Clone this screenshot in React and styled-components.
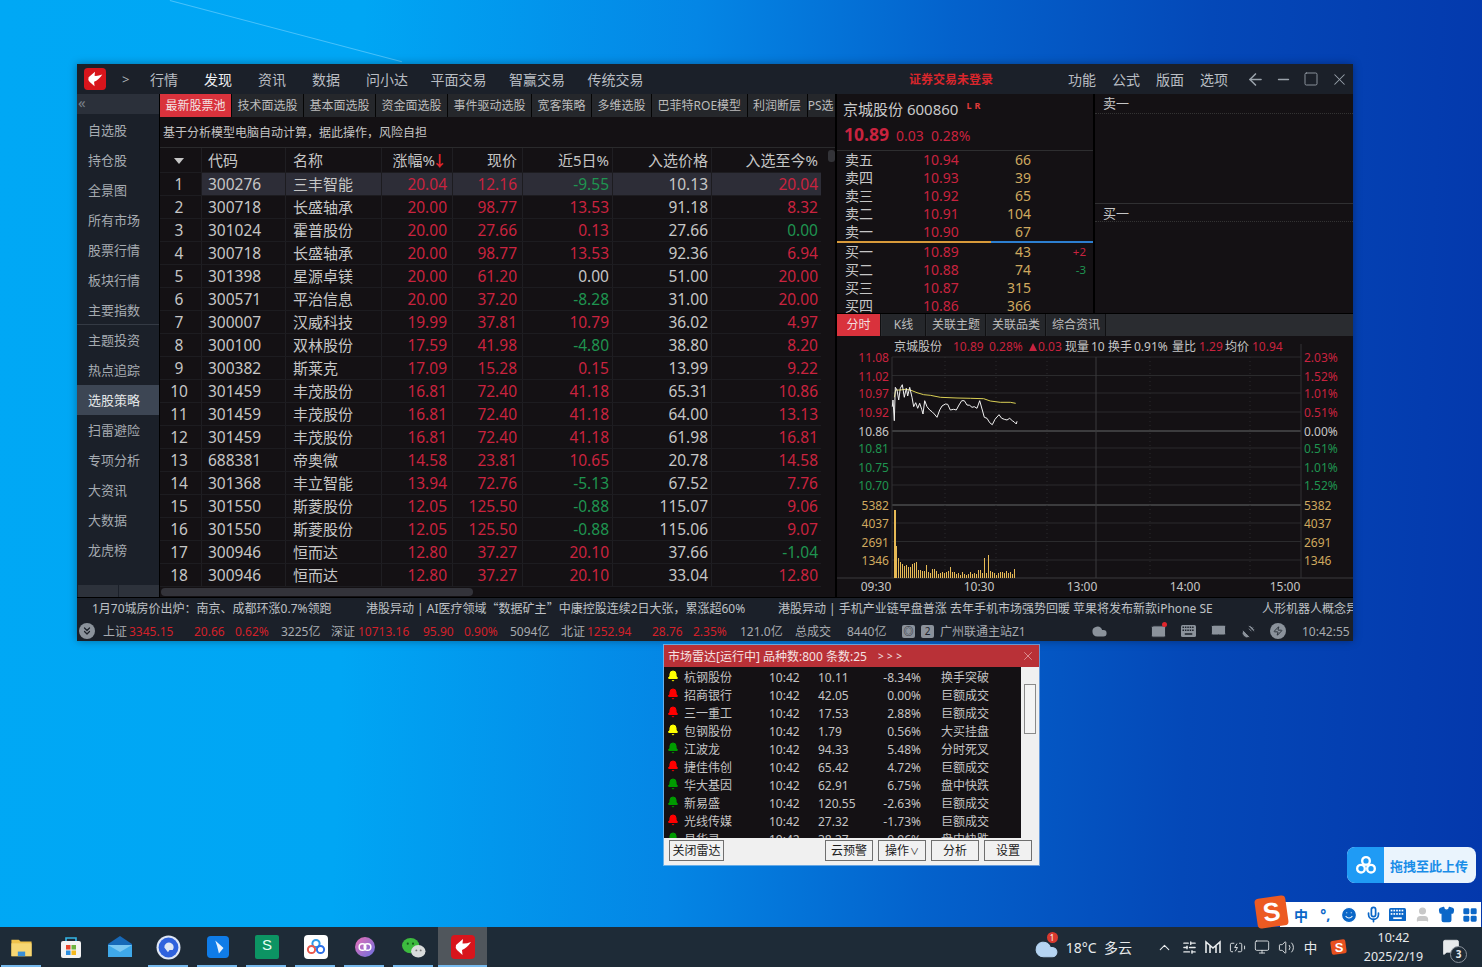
import React from 'react';
import styled, { createGlobalStyle } from 'styled-components';
import {
  ArrowLeft, Minus, Square, X, Cloud, Mail, Monitor, SatelliteDish, Zap,
  ChevronUp, ChevronsDown, SlidersHorizontal, Volume2, BatteryCharging, MessageSquare,
  Smile, Mic, Shirt, LayoutGrid, User, Bell,
} from 'lucide-react';

const RED = '#c9233f';
const GREEN = '#1f9450';
const WHITE = '#c6c6c6';
const GOLD = '#cfa95f';
const BAR = '#1b2029';
const FONT = '"Noto Sans", "Noto Sans CJK SC", sans-serif';

const GlobalStyle = createGlobalStyle`
  html, body { margin: 0; padding: 0; height: 100%; overflow: hidden; }
  * { box-sizing: border-box; }
  body { font-family: ${FONT}; }
`;

const navItems = ['行情', '发现', '资讯', '数据', '问小达', '平面交易', '智赢交易', '传统交易'];
const sideItems = ['自选股', '持仓股', '全景图', '所有市场', '股票行情', '板块行情', '主要指数', '主题投资', '热点追踪', '选股策略', '扫雷避险', '专项分析', '大资讯', '大数据', '龙虎榜'];
const tabs = ['最新股票池', '技术面选股', '基本面选股', '资金面选股', '事件驱动选股', '宽客策略', '多维选股', '巴菲特ROE模型', '利润断层'];

const stocks = [
  ['300276', '三丰智能', '20.04', '12.16', '-9.55', '10.13', '20.04'],
  ['300718', '长盛轴承', '20.00', '98.77', '13.53', '91.18', '8.32'],
  ['301024', '霍普股份', '20.00', '27.66', '0.13', '27.66', '0.00'],
  ['300718', '长盛轴承', '20.00', '98.77', '13.53', '92.36', '6.94'],
  ['301398', '星源卓镁', '20.00', '61.20', '0.00', '51.00', '20.00'],
  ['300571', '平治信息', '20.00', '37.20', '-8.28', '31.00', '20.00'],
  ['300007', '汉威科技', '19.99', '37.81', '10.79', '36.02', '4.97'],
  ['300100', '双林股份', '17.59', '41.98', '-4.80', '38.80', '8.20'],
  ['300382', '斯莱克', '17.09', '15.28', '0.15', '13.99', '9.22'],
  ['301459', '丰茂股份', '16.81', '72.40', '41.18', '65.31', '10.86'],
  ['301459', '丰茂股份', '16.81', '72.40', '41.18', '64.00', '13.13'],
  ['301459', '丰茂股份', '16.81', '72.40', '41.18', '61.98', '16.81'],
  ['688381', '帝奥微', '14.58', '23.81', '10.65', '20.78', '14.58'],
  ['301368', '丰立智能', '13.94', '72.76', '-5.13', '67.52', '7.76'],
  ['301550', '斯菱股份', '12.05', '125.50', '-0.88', '115.07', '9.06'],
  ['301550', '斯菱股份', '12.05', '125.50', '-0.88', '115.06', '9.07'],
  ['300946', '恒而达', '12.80', '37.27', '20.10', '37.66', '-1.04'],
  ['300946', '恒而达', '12.80', '37.27', '20.10', '33.04', '12.80'],
];

const sells = [['卖五', '10.94', '66'], ['卖四', '10.93', '39'], ['卖三', '10.92', '65'], ['卖二', '10.91', '104'], ['卖一', '10.90', '67']];
const buys = [['买一', '10.89', '43', '+2'], ['买二', '10.88', '74', '-3'], ['买三', '10.87', '315'], ['买四', '10.86', '366']];

const radarRows = [
  ['#ffff00', '杭钢股份', '10.11', '-8.34%', '换手突破'],
  ['#ff0000', '招商银行', '42.05', '0.00%', '巨额成交'],
  ['#ff0000', '三一重工', '17.53', '2.88%', '巨额成交'],
  ['#ffff00', '包钢股份', '1.79', '0.56%', '大买挂盘'],
  ['#009a00', '江波龙', '94.33', '5.48%', '分时死叉'],
  ['#ff0000', '捷佳伟创', '65.42', '4.72%', '巨额成交'],
  ['#009a00', '华大基因', '62.91', '6.75%', '盘中快跌'],
  ['#009a00', '新易盛', '120.55', '-2.63%', '巨额成交'],
  ['#ff0000', '光线传媒', '27.32', '-1.73%', '巨额成交'],
  ['#009a00', '易华录', '38.37', '-0.96%', '盘中快跌'],
];

const signColor = (v) => {
  const n = parseFloat(v);
  if (n < 0) return GREEN;
  return n > 0 ? RED : WHITE;
};

const Desktop = styled.div`
  position: relative;
  width: 100vw;
  height: 100vh;
  display: flex;
  flex-direction: column;
  justify-content: flex-end;
  overflow: hidden;
  background: linear-gradient(92deg, #00a8f5 0%, #00a6f4 24%, #0486e5 46%, #0462cc 63%, #0448b8 80%, #0438ac 100%);
  &::before {
    content: '';
    position: absolute;
    left: 170px;
    top: 0;
    width: 240px;
    height: 1px;
    background: rgba(130, 215, 255, 0.55);
    transform: rotate(14.8deg);
    transform-origin: left top;
  }
`;

const Win = styled.div`
  position: absolute;
  left: 77px;
  top: 64px;
  width: 1276px;
  height: 577px;
  display: flex;
  flex-direction: column;
  background: #000;
  box-shadow: 0 0 8px rgba(0, 0, 0, 0.35);
`;

const TitleBar = styled.div`
  height: 30px;
  display: flex;
  align-items: center;
  background: ${BAR};
  padding-left: 7px;
  color: #b9bdc3;
  font-size: 14px;
`;

const Caret = styled.span`
  width: 44px;
  padding-left: 16px;
  font-size: 13px;
  color: #b0b4ba;
`;

const NavItem = styled.span`
  min-width: 54px;
  padding-right: 22.5px;
  white-space: nowrap;
  color: ${(p) => (p.$active ? '#eceff2' : '#b9bdc3')};
`;

const LoginWarn = styled.span`
  margin-left: auto;
  font-size: 12px;
  font-weight: 700;
  color: #d8262c;
  width: 159px;
`;

const MenuItem = styled.span`
  width: 44px;
  white-space: nowrap;
`;

const WinBtns = styled.div`
  display: flex;
  align-items: center;
  width: 112px;
  margin-left: -3px;
  color: #9aa2ab;
  span {
    width: 28px;
    display: flex;
    justify-content: center;
  }
`;

const Body = styled.div`
  flex: 1;
  display: flex;
  min-height: 0;
`;

const Sidebar = styled.div`
  width: 82px;
  margin-right: 1px;
  background: ${BAR};
  display: flex;
  flex-direction: column;
`;

const Collapse = styled.div`
  height: 20px;
  margin-bottom: 1px;
  line-height: 16px;
  padding-left: 1px;
  font-size: 15px;
  color: #78808a;
  background: #2b303a;
`;

const SideItem = styled.div`
  height: 30px;
  line-height: 30px;
  padding-left: 11px;
  font-size: 13px;
  color: ${(p) => (p.$active ? '#e4e6e8' : '#a6abb1')};
  background: ${(p) => (p.$active ? '#3d4654' : 'transparent')};
  border-bottom: ${(p) => (p.$line ? '1px solid #343a44' : 'none')};
`;

const SideFoot = styled.div`
  margin-top: auto;
  height: 12px;
  display: flex;
  gap: 1px;
  padding-left: 1px;
  span {
    flex: 1;
    background: #2d323b;
  }
`;

const Main = styled.div`
  width: 675px;
  margin-right: 2px;
  display: flex;
  flex-direction: column;
  background: #141114;
  overflow: hidden;
`;

const TabStrip = styled.div`
  height: 23px;
  display: flex;
  gap: 1px;
  background: #050505;
  overflow: hidden;
  flex: none;
`;

const Tab = styled.div`
  padding: 0 5.5px;
  line-height: 23px;
  font-size: 12px;
  white-space: nowrap;
  color: ${(p) => (p.$active ? '#f2e3e3' : '#bcbcbc')};
  background: ${(p) => (p.$active ? '#d9323c' : '#25272b')};
  width: ${(p) => (p.$active ? '71px' : 'auto')};
  text-align: center;
`;

const TabCut = styled(Tab)`
  flex: 1;
  padding: 0;
  text-align: left;
  overflow: hidden;
`;

const Note = styled.div`
  height: 31px;
  line-height: 31px;
  padding-left: 3px;
  font-size: 12px;
  color: #c4c4c4;
  border-bottom: 1px solid #2a2a2c;
  flex: none;
`;

const TableWrap = styled.div`
  flex: 1;
  display: flex;
  min-height: 0;
`;

const Table = styled.div`
  width: 661px;
`;

const Row = styled.div`
  display: grid;
  grid-template-columns: 41px 84px 96px 71px 70px 90px 99px 110px;
  height: ${(p) => (p.$head ? '25px' : '23px')};
  line-height: ${(p) => (p.$head ? '24px' : '22px')};
  border-bottom: 1px solid #1d1c20;
  & > :nth-child(3) { padding-left: 7px; }
  & > :nth-child(4), & > :nth-child(5) { padding-right: 5px; }
`;

const Cell = styled.div`
  padding: 0 ${(p) => (p.$align === 'right' ? '3px' : '6px')} 0 ${(p) => (p.$align === 'right' ? '2px' : '6px')};
  text-align: ${(p) => p.$align || 'left'};
  font-size: ${(p) => (p.$cjk ? '15px' : '15.5px')};
  color: ${(p) => p.$color || WHITE};
  background: ${(p) => (p.$sel ? '#2d2d37' : 'transparent')};
  border-left: 1px solid ${(p) => (p.$sel ? '#1d1c20' : '#1f1e22')};
  white-space: nowrap;
  overflow: hidden;
`;

const Idx = styled(Cell)`
  text-align: center;
  padding: 0 3px 0 0;
  border-left: none;
`;

const SortMark = styled.i`
  display: inline-block;
  width: 0;
  height: 0;
  margin-bottom: 2px;
  border-left: 5px solid transparent;
  border-right: 5px solid transparent;
  border-top: 6px solid #c6c6c6;
`;

const DownArrow = styled.b`
  color: #e0272f;
  font-weight: 700;
  margin-left: -3px;
`;

const VTrack = styled.div`
  flex: 1;
  padding: 2px 0 0 7px;
  span {
    display: block;
    height: 12px;
    border-radius: 3px;
    background: #333338;
  }
`;

const HScroll = styled.div`
  height: 10px;
  flex: none;
  padding: 1px 0 0 1px;
  background: #141114;
  span {
    display: block;
    width: 312px;
    height: 8px;
    border-radius: 4px;
    background: #33333a;
  }
`;

const Right = styled.div`
  flex: 1;
  display: flex;
  flex-direction: column;
  min-width: 0;
`;

const TopRight = styled.div`
  height: 219px;
  display: flex;
  gap: 2px;
  overflow: hidden;
  flex: none;
`;

const Quote = styled.div`
  width: 256px;
  background: #141114;
  overflow: hidden;
`;

const QuoteHead = styled.div`
  height: 57px;
  padding: 5px 0 0 6px;
  border-bottom: 1px solid #2e2e30;
  color: #c9c9c9;
`;

const QuoteName = styled.div`
  font-size: 15px;
  line-height: 20px;
  white-space: nowrap;
  sup {
    font-size: 9px;
    font-weight: 700;
    line-height: 0;
    color: #e03a3a;
    margin-left: 8px;
    letter-spacing: 3px;
  }
`;

const QuoteLast = styled.div`
  display: flex;
  align-items: baseline;
  margin-top: 4px;
  color: ${RED};
  font-size: 14px;
  line-height: 22px;
  b {
    font-size: 17.5px;
    width: 53px;
    padding-left: 1px;
  }
  span {
    width: 35px;
  }
`;

const BookRow = styled.div`
  display: grid;
  grid-template-columns: 78px 61px 47px 55px;
  height: 18px;
  line-height: 18px;
  padding-left: 8px;
  font-size: 14px;
  color: ${WHITE};
`;

const BookPrice = styled.span`
  color: ${RED};
`;

const BookVol = styled.span`
  color: ${GOLD};
  text-align: right;
`;

const BookDelta = styled.span`
  color: ${(p) => p.$color};
  text-align: right;
  font-size: 11.5px;
`;

const BookLine = styled.div`
  height: 2px;
  background: linear-gradient(90deg, #d89a3a 0 60%, #2d7fd0 60%);
`;

const Trades = styled.div`
  flex: 1;
  background: #141114;
  display: flex;
  flex-direction: column;
`;

const TradeHead = styled.div`
  height: ${(p) => (p.$first ? '20px' : '19px')};
  line-height: 18px;
  padding-left: 8px;
  font-size: 13px;
  color: ${WHITE};
  border-top: ${(p) => (p.$first ? 'none' : '1px solid #303032')};
  border-bottom: 1px dotted #333;
`;

const TradeGap = styled.div`
  height: 89px;
`;

const ChartTabs = styled.div`
  height: 22px;
  margin-top: 1px;
  display: flex;
  gap: 1px;
  background: #2a2c30;
  flex: none;
`;

const ChartTab = styled.div`
  width: ${(p) => p.$w}px;
  text-align: center;
  line-height: 21px;
  font-size: 12px;
  color: ${(p) => (p.$active ? '#f3dede' : '#bcbcbc')};
  background: ${(p) => (p.$active ? '#d9323c' : '#25272b')};
  border-right: 1px solid #101012;
`;

const ChartBox = styled.div`
  flex: 1;
  background: #141114;
  svg {
    display: block;
    font-family: ${FONT};
    font-size: 12px;
  }
`;

const Ticker = styled.div`
  height: 24px;
  display: flex;
  align-items: center;
  padding: 0 0 3px 15px;
  border-top: 1px solid #000;
  background: ${BAR};
  font-size: 12px;
  color: #bfc2c6;
  overflow: hidden;
  white-space: nowrap;
  flex: none;
`;

const TickerItem = styled.span`
  flex: none;
  width: ${(p) => p.$w}px;
`;

const WideQuote = styled.span`
  font-family: "Noto Sans CJK SC", sans-serif;
`;

const StatusBar = styled.div`
  height: 20px;
  display: flex;
  align-items: center;
  padding-left: 2px;
  background: ${BAR};
  font-size: 12px;
  color: #a7abb0;
  white-space: nowrap;
  overflow: hidden;
  flex: none;
`;

const Stat = styled.span`
  flex: none;
  width: ${(p) => p.$w}px;
  color: ${(p) => (p.$up ? '#d3202a' : '#a7abb0')};
`;

const RoundIcon = styled.span`
  flex: none;
  width: 16px;
  height: 16px;
  margin-right: ${(p) => (p.$flush ? 0 : 8)}px;
  border-radius: 50%;
  background: #8b929b;
  color: ${BAR};
  display: flex;
  align-items: center;
  justify-content: center;
`;

const BoxTag = styled.span`
  flex: none;
  width: 13px;
  height: 13px;
  line-height: 13px;
  margin-right: 6px;
  text-align: center;
  border-radius: 2px;
  font-size: 10px;
  color: ${BAR};
  background: #8b929b;
`;

const StatusIcons = styled.div`
  margin-left: auto;
  display: flex;
  align-items: center;
  color: ${BAR};
  svg {
    flex: none;
    fill: #8b929b;
  }
`;

const StatusSlot = styled.span`
  position: relative;
  width: ${(p) => p.$w}px;
  display: flex;
  justify-content: center;
`;

const RedDot = styled.i`
  position: absolute;
  right: 6px;
  top: -1px;
  width: 5px;
  height: 5px;
  border-radius: 50%;
  background: #e0262c;
`;

const Clock = styled.span`
  width: 51px;
  color: #a7abb0;
`;

const Radar = styled.div`
  position: absolute;
  left: 664px;
  top: 645px;
  width: 375px;
  height: 220px;
  display: flex;
  flex-direction: column;
  background: #f0f0f0;
  box-shadow: 0 0 0 1px rgba(200, 220, 240, 0.5);
`;

const RadarHead = styled.div`
  height: 22px;
  display: flex;
  align-items: center;
  padding: 0 4px;
  background: #b93137;
  color: #f4e2e2;
  font-size: 12px;
  white-space: nowrap;
  small {
    font-size: 10px;
    margin-left: 11px;
    letter-spacing: 3.5px;
  }
  svg {
    margin-left: auto;
    color: #e9b3b3;
  }
`;

const RadarBody = styled.div`
  height: 171px;
  display: flex;
  flex: none;
`;

const RadarList = styled.div`
  width: 357px;
  background: #141114;
  overflow: hidden;
  padding-top: 2px;
`;

const RadarRow = styled.div`
  display: grid;
  grid-template-columns: 20px 85px 49px 63px 40px 1fr;
  height: 18px;
  line-height: 18px;
  font-size: 12px;
  color: #c4c4c4;
  white-space: nowrap;
  span:nth-child(5) { text-align: right; }
  span:nth-child(6) { padding-left: 20px; }
  span:nth-child(1) { padding-left: 3px; }
`;

const RadarScroll = styled.div`
  flex: 1;
  padding: 17px 3px 0;
  background: #f0f0f0;
  span {
    display: block;
    height: 50px;
    background: #f4f4f4;
    border: 1px solid #8a8a8a;
  }
`;

const RadarFoot = styled.div`
  flex: 1;
  display: flex;
  align-items: flex-start;
  padding: 2px 6px 0 5px;
  gap: 5px;
`;

const RadarBtn = styled.div`
  width: ${(p) => p.$w || 48}px;
  height: 21px;
  line-height: 19px;
  text-align: center;
  font-size: 12px;
  color: #1c1c1c;
  background: #f1f1f1;
  border: 1px solid #6f6f6f;
  margin-left: ${(p) => p.$gap || 0}px;
  white-space: nowrap;
  small {
    font-size: 9px;
    margin-left: 1px;
  }
`;

const Pill = styled.div`
  position: absolute;
  left: 1347px;
  top: 847px;
  width: 129px;
  height: 36px;
  display: flex;
  align-items: center;
  border-radius: 8px;
  overflow: hidden;
  background: #eaf4fd;
  color: #1a8de8;
  font-size: 13px;
  font-weight: 700;
`;

const PillIcon = styled.div`
  width: 37px;
  height: 100%;
  margin-right: 6px;
  display: flex;
  align-items: center;
  justify-content: center;
  background: #1f9bf5;
`;

const Ime = styled.div`
  position: absolute;
  left: 1280px;
  top: 902px;
  width: 201px;
  height: 25px;
  display: flex;
  align-items: center;
  padding-left: 9px;
  background: #fff;
  color: #0b67c8;
  font-weight: 700;
  font-size: 14px;
`;

const ImeSlot = styled.span`
  width: 24.2px;
  flex: none;
  display: flex;
  justify-content: center;
`;

const ImeLogo = styled.div`
  position: absolute;
  left: 1256px;
  top: 897px;
  width: 31px;
  height: 30px;
  transform: rotate(-8deg);
  border-radius: 4px;
  background: #ec5a22;
  color: #fff;
  font: 700 26px/30px "Liberation Sans", sans-serif;
  text-align: center;
`;

const Taskbar = styled.div`
  height: 40px;
  display: flex;
  align-items: stretch;
  background: #1e2b37;
  color: #e7eaec;
  flex: none;
`;

const Apps = styled.div`
  display: flex;
  margin-left: -3px;
`;

const AppSlot = styled.div`
  width: 49px;
  display: flex;
  align-items: center;
  justify-content: center;
  position: relative;
  background: ${(p) => (p.$active ? '#50565c' : 'transparent')};
  &::after {
    content: '';
    position: absolute;
    left: ${(p) => (p.$active ? '0' : '4px')};
    right: ${(p) => (p.$active ? '0' : '5px')};
    bottom: 0;
    height: 2px;
    background: ${(p) => (p.$open ? '#76b9ed' : 'transparent')};
  }
`;

const Tray = styled.div`
  margin-left: auto;
  display: flex;
  align-items: center;
  color: #e7eaec;
`;

const Weather = styled.div`
  position: relative;
  width: 32px;
  height: 30px;
  display: flex;
  align-items: flex-end;
  color: #b5d4f2;
  svg { fill: currentColor; }
  em {
    position: absolute;
    left: 13px;
    top: 0;
    width: 11px;
    height: 11px;
    border-radius: 50%;
    background: #d8392f;
    color: #fff;
    font: 8px/11px "Noto Sans", sans-serif;
    text-align: center;
  }
`;

const WeatherText = styled.span`
  width: 87px;
  font-size: 14px;
  word-spacing: 4px;
  white-space: nowrap;
`;

const TraySlot = styled.span`
  width: 24.3px;
  margin-left: ${(p) => p.$gap || 0}px;
  display: flex;
  justify-content: center;
  font-size: 13.5px;
`;

const DateBox = styled.div`
  width: 75px;
  margin-left: 5px;
  text-align: center;
  font-size: 12.5px;
  line-height: 19px;
  white-space: nowrap;
`;

const Notify = styled.div`
  position: relative;
  width: 39px;
  margin-right: 12px;
  display: flex;
  justify-content: center;
  align-items: center;
  height: 100%;
  svg { fill: #e7eaec; }
  em {
    position: absolute;
    left: 19px;
    top: 19px;
    width: 17px;
    height: 17px;
    border-radius: 50%;
    border: 1px solid #8b929b;
    background: #1e2b37;
    font: 700 10px/15px "Noto Sans", sans-serif;
    text-align: center;
  }
`;

const LogoMark = ({ size = 22 }) => (
  <svg width={size} height={size} viewBox="0 0 24 24">
    <rect width="24" height="24" rx="4" fill="#d8151c" />
    <path d="M5 10 L12 4 L11.5 8.5 Q15 9 20 7 Q16 13 11 15 L11.5 20 L6 15 Q4 13 5 10 Z" fill="#fff" />
  </svg>
);

// filled keyboard with light keys, used in the status bar and the IME bar
const KeyGrid = ({ size, body, keys }) => (
  <svg width={size} height={size * 0.8} viewBox="0 0 20 16" style={{ fill: body }}>
    <rect width="20" height="16" rx="2" fill={body} />
    {[3, 6.2, 9.4, 12.6, 15.8].map((x) => [3, 7].map((y) => (
      <rect key={`${x}-${y}`} x={x - 1} y={y - 1} width="2" height="2" fill={keys} />
    )))}
    <rect x="5" y="11" width="10" height="2" fill={keys} />
  </svg>
);

const AppIcon = ({ kind }) => {
  switch (kind) {
    case 'folder':
      return (
        <svg width="23" height="22" viewBox="0 0 24 24">
          <path d="M1 4 h8 l2 2 h12 v16 H1 Z" fill="#f0c24b" />
          <path d="M1 8 h22 v14 H1 Z" fill="#f7d774" />
          <rect x="8" y="17" width="8" height="5" fill="#3a8fd6" />
        </svg>
      );
    case 'store':
      return (
        <svg width="24" height="24" viewBox="0 0 24 24">
          <path d="M7 6 V3 h10 v3" fill="none" stroke="#35b6e6" strokeWidth="1.6" />
          <rect x="2" y="6" width="20" height="17" rx="2" fill="#f3f3f3" />
          <rect x="7" y="10" width="4.5" height="4.5" fill="#e8452c" />
          <rect x="12.5" y="10" width="4.5" height="4.5" fill="#6cb33f" />
          <rect x="7" y="15.5" width="4.5" height="4.5" fill="#2c8fe0" />
          <rect x="12.5" y="15.5" width="4.5" height="4.5" fill="#f5b91f" />
        </svg>
      );
    case 'mail':
      return (
        <svg width="24" height="24" viewBox="0 0 24 24">
          <path d="M0 9 L12 1 L24 9 V22 H0 Z" fill="#1769b8" />
          <path d="M0 10 h24 v12 H0 Z" fill="#3fa9ea" />
          <path d="M0 10 L12 17 L24 10" fill="#7cc8f3" />
        </svg>
      );
    case 'browser':
      return (
        <svg width="25" height="25" viewBox="0 0 24 24">
          <circle cx="12" cy="12" r="11.5" fill="#dfe7f5" />
          <circle cx="12" cy="12" r="9.5" fill="#2f62dd" />
          <path d="M8 12 a4.5 4.5 0 1 1 8 2.5 h-3 l-1.5 2 Z" fill="#dfe7f5" />
        </svg>
      );
    case 'blue':
      return (
        <svg width="22" height="22" viewBox="0 0 24 24">
          <rect width="24" height="24" rx="4" fill="#0f7ce8" />
          <path d="M9 5 L18 13 L13 19 L11 11 Z" fill="#e6f2ff" />
        </svg>
      );
    case 'sheet':
      return (
        <svg width="24" height="24" viewBox="0 0 24 24">
          <rect width="24" height="24" rx="2" fill="#0c9463" />
          <text x="12" y="15" textAnchor="middle" fontSize="15" fill="#e8fff5" fontFamily="Liberation Sans">S</text>
        </svg>
      );
    case 'baidu':
      return (
        <svg width="24" height="24" viewBox="0 0 24 24">
          <rect width="24" height="24" rx="4" fill="#fff" />
          <circle cx="12" cy="8.5" r="3.6" fill="none" stroke="#2c9be8" strokeWidth="2" />
          <circle cx="7.5" cy="14.5" r="3.6" fill="none" stroke="#e9584d" strokeWidth="2" />
          <circle cx="16.5" cy="14.5" r="3.6" fill="none" stroke="#2c6fe8" strokeWidth="2" />
        </svg>
      );
    case 'purple':
      return (
        <svg width="20" height="20" viewBox="0 0 24 24">
          <defs>
            <linearGradient id="pg" x1="0" y1="0" x2="1" y2="1">
              <stop offset="0" stopColor="#e86fb4" />
              <stop offset="1" stopColor="#6a6fe0" />
            </linearGradient>
          </defs>
          <circle cx="12" cy="12" r="12" fill="url(#pg)" />
          <circle cx="9" cy="12" r="4" fill="none" stroke="#fff" strokeWidth="1.8" />
          <circle cx="15" cy="12" r="4" fill="none" stroke="#fff" strokeWidth="1.8" />
        </svg>
      );
    case 'wechat':
      return (
        <svg width="25" height="23" viewBox="0 0 26 24">
          <ellipse cx="10" cy="10" rx="9" ry="8" fill="#3dbb3f" />
          <ellipse cx="18" cy="16" rx="7.5" ry="6.5" fill="#d9dcdc" />
          <circle cx="16" cy="15" r="1" fill="#777" />
          <circle cx="20.5" cy="15" r="1" fill="#777" />
          <circle cx="7" cy="8" r="1.1" fill="#14591a" />
          <circle cx="12.5" cy="8" r="1.1" fill="#14591a" />
        </svg>
      );
    default:
      return <LogoMark size={24} />;
  }
};

const apps = [
  ['folder', true], ['store', false], ['mail', false], ['browser', true], ['blue', true],
  ['sheet', true], ['baidu', true], ['purple', true], ['wechat', true], ['logo', true],
];

// chart points read off the reference at 3x, relative to (837, 310)
const whitePts = [[166,290],[168,270],[172,332],[175,232],[180,240],[185,270],[190,235],[196,224],[202,262],[208,235],[212,258],[218,232],[225,262],[230,290],[236,278],[242,295],[248,280],[254,298],[258,312],[263,272],[270,290],[278,300],[285,305],[292,312],[300,322],[308,300],[315,288],[325,282],[332,283],[340,300],[350,298],[358,300],[366,285],[374,272],[382,272],[390,285],[398,286],[405,292],[412,290],[420,295],[428,272],[436,300],[442,322],[450,325],[458,338],[466,344],[474,328],[486,314],[494,325],[502,328],[510,330],[518,325],[526,332],[532,336],[538,342],[540,334]];
const yellowPts = [[172,262],[176,240],[190,240],[205,238],[220,240],[240,248],[260,254],[280,256],[310,262],[360,264],[400,265],[440,266],[460,273],[490,277],[520,277],[536,280]];
const toPoints = (pts) => pts.map(([x, y]) => `${(x / 3).toFixed(1)},${(y / 3 - 26).toFixed(1)}`).join(' ');

const volumes = [68,32,20,16,14,12,13,11,11,14,15,16,8,8,7,7,13,6,5,9,9,7,4,5,6,5,6,7,11,6,6,4,5,3,6,4,3,4,6,4,5,4,8,8,5,20,5,23,7,6,5,3,5,6,6,5,7,5,6,4,9];

const leftAxis = [
  [21, '11.08', RED], [39.5, '11.02', RED], [57, '10.97', RED], [76, '10.92', RED], [95, '10.86', WHITE],
  [112, '10.81', GREEN], [131, '10.75', GREEN], [149, '10.70', GREEN],
  [169, '5382', GOLD], [187, '4037', GOLD], [205.5, '2691', GOLD], [224, '1346', GOLD],
];
const rightAxis = [
  [21, '2.03%', RED], [39.5, '1.52%', RED], [57, '1.01%', RED], [76, '0.51%', RED], [95, '0.00%', WHITE],
  [112, '0.51%', GREEN], [131, '1.01%', GREEN], [149, '1.52%', GREEN],
  [169, '5382', GOLD], [187, '4037', GOLD], [205.5, '2691', GOLD], [224, '1346', GOLD],
];
const headText = [
  [57, '京城股份', WHITE], [116, '10.89', RED], [152, '0.28%', RED], [201, '0.03', RED], [228, '现量', WHITE],
  [254, '10', WHITE], [271, '换手', WHITE], [297, '0.91%', WHITE], [335, '量比', WHITE], [362, '1.29', RED],
  [388, '均价', WHITE], [415, '10.94', RED],
];

const Chart = () => (
  <svg width="516" height="260" viewBox="0 0 516 260">
    {leftAxis.map(([y]) => (
      <line key={y} x1="55" x2="464" y1={y} y2={y} stroke={y === 95 || y === 169 ? '#3c3c3e' : '#2b2b2d'} strokeWidth={y === 95 || y === 169 ? 2 : 1} />
    ))}
    <line x1="0" x2="516" y1="242" y2="242" stroke="#3a3a3c" />
    <line x1="55" x2="55" y1="21" y2="242" stroke="#333335" />
    <line x1="464" x2="464" y1="8" y2="242" stroke="#333335" />
    <line x1="259" x2="259" y1="21" y2="242" stroke="#3a3a3c" />
    {[108, 159, 210, 313, 413].map((x) => (
      <line key={x} x1={x} x2={x} y1="21" y2="242" stroke="#2b2b2d" strokeDasharray="1 3" />
    ))}
    {volumes.map((h, i) => (
      <rect key={i} x={57 + i * 2} y={242 - h} width={i === 0 ? 2 : 1} height={h} fill="#e6b955" />
    ))}
    <polyline points={toPoints(yellowPts)} fill="none" stroke="#d9cf55" strokeWidth="1" />
    <polyline points={toPoints(whitePts)} fill="none" stroke="#f2f2f2" strokeWidth="1" />
    <path d="M192 15 L196 7 L200 15 Z" fill={RED} />
    {headText.map(([x, t, c]) => (
      <text key={x} x={x} y="15" fill={c}>{t}</text>
    ))}
    {leftAxis.map(([y, t, c]) => (
      <text key={y} x="52" y={y + 5} fill={c} textAnchor="end">{t}</text>
    ))}
    {rightAxis.map(([y, t, c]) => (
      <text key={y} x="467" y={y + 5} fill={c}>{t}</text>
    ))}
    {[[39, '09:30'], [142, '10:30'], [245, '13:00'], [348, '14:00'], [448, '15:00']].map(([x, t]) => (
      <text key={x} x={x} y="255" fill={WHITE} textAnchor="middle">{t}</text>
    ))}
  </svg>
);

export default function App() {
  return (
    <Desktop>
      <GlobalStyle />
      <Win>
        <TitleBar>
          <LogoMark />
          <Caret>&gt;</Caret>
          {navItems.map((n) => (
            <NavItem key={n} $active={n === '发现'}>{n}</NavItem>
          ))}
          <LoginWarn>证券交易未登录</LoginWarn>
          {['功能', '公式', '版面', '选项'].map((m) => (
            <MenuItem key={m}>{m}</MenuItem>
          ))}
          <WinBtns>
            <span><ArrowLeft size={19} /></span>
            <span><Minus size={17} /></span>
            <span><Square size={16} strokeWidth={1.3} /></span>
            <span><X size={19} strokeWidth={1.3} /></span>
          </WinBtns>
        </TitleBar>
        <Body>
          <Sidebar>
            <Collapse>«</Collapse>
            {sideItems.map((s) => (
              <SideItem key={s} $active={s === '选股策略'} $line={s === '主要指数'}>{s}</SideItem>
            ))}
            <SideFoot><span /><span /></SideFoot>
          </Sidebar>
          <Main>
            <TabStrip>
              {tabs.map((t, i) => (
                <Tab key={t} $active={i === 0}>{t}</Tab>
              ))}
              <TabCut>PS选</TabCut>
            </TabStrip>
            <Note>基于分析模型电脑自动计算，据此操作，风险自担</Note>
            <TableWrap>
              <Table>
                <Row $head>
                  <Idx><SortMark /></Idx>
                  <Cell $cjk>代码</Cell>
                  <Cell $cjk>名称</Cell>
                  <Cell $cjk $align="right">涨幅%<DownArrow>↓</DownArrow></Cell>
                  <Cell $cjk $align="right">现价</Cell>
                  <Cell $cjk $align="right">近5日%</Cell>
                  <Cell $cjk $align="right">入选价格</Cell>
                  <Cell $cjk $align="right">入选至今%</Cell>
                </Row>
                {stocks.map((s, i) => (
                  <Row key={i}>
                    <Idx>{i + 1}</Idx>
                    <Cell $sel={i === 0}>{s[0]}</Cell>
                    <Cell $sel={i === 0} $cjk>{s[1]}</Cell>
                    <Cell $sel={i === 0} $align="right" $color={RED}>{s[2]}</Cell>
                    <Cell $sel={i === 0} $align="right" $color={RED}>{s[3]}</Cell>
                    <Cell $sel={i === 0} $align="right" $color={signColor(s[4])}>{s[4]}</Cell>
                    <Cell $sel={i === 0} $align="right">{s[5]}</Cell>
                    <Cell $sel={i === 0} $align="right" $color={s[6] === '0.00' ? GREEN : signColor(s[6])}>{s[6]}</Cell>
                  </Row>
                ))}
              </Table>
              <VTrack><span /></VTrack>
            </TableWrap>
            <HScroll><span /></HScroll>
          </Main>
          <Right>
            <TopRight>
              <Quote>
                <QuoteHead>
                  <QuoteName>京城股份 600860<sup>LR</sup></QuoteName>
                  <QuoteLast>
                    <b>10.89</b>
                    <span>0.03</span>
                    <span>0.28%</span>
                  </QuoteLast>
                </QuoteHead>
                {sells.map(([l, p, v]) => (
                  <BookRow key={l}>
                    <span>{l}</span>
                    <BookPrice>{p}</BookPrice>
                    <BookVol>{v}</BookVol>
                  </BookRow>
                ))}
                <BookLine />
                {buys.map(([l, p, v, d]) => (
                  <BookRow key={l}>
                    <span>{l}</span>
                    <BookPrice>{p}</BookPrice>
                    <BookVol>{v}</BookVol>
                    {d && <BookDelta $color={d[0] === '+' ? RED : GREEN}>{d}</BookDelta>}
                  </BookRow>
                ))}
              </Quote>
              <Trades>
                <TradeHead $first>卖一</TradeHead>
                <TradeGap />
                <TradeHead>买一</TradeHead>
              </Trades>
            </TopRight>
            <ChartTabs>
              <ChartTab $w={44} $active>分时</ChartTab>
              <ChartTab $w={44}>K线</ChartTab>
              <ChartTab $w={59}>关联主题</ChartTab>
              <ChartTab $w={59}>关联品类</ChartTab>
              <ChartTab $w={59}>综合资讯</ChartTab>
            </ChartTabs>
            <ChartBox><Chart /></ChartBox>
          </Right>
        </Body>
        <Ticker>
          <TickerItem $w={274}>1月70城房价出炉：南京、成都环涨0.7%领跑</TickerItem>
          <TickerItem $w={412}>港股异动 | AI医疗领域<WideQuote>“</WideQuote>数据矿主<WideQuote>”</WideQuote>中康控股连续2日大张，累涨超60%</TickerItem>
          <TickerItem $w={484}>港股异动 | 手机产业链早盘普涨 去年手机市场强势回暖 苹果将发布新款iPhone SE</TickerItem>
          <TickerItem $w={200}>人形机器人概念异动拉升</TickerItem>
        </Ticker>
        <StatusBar>
          <RoundIcon><ChevronsDown size={12} strokeWidth={2.4} /></RoundIcon>
          <Stat $w={26}>上证</Stat>
          <Stat $w={65} $up>3345.15</Stat>
          <Stat $w={41} $up>20.66</Stat>
          <Stat $w={46} $up>0.62%</Stat>
          <Stat $w={50}>3225亿</Stat>
          <Stat $w={27}>深证</Stat>
          <Stat $w={65} $up>10713.16</Stat>
          <Stat $w={41} $up>95.90</Stat>
          <Stat $w={46} $up>0.90%</Stat>
          <Stat $w={51}>5094亿</Stat>
          <Stat $w={26}>北证</Stat>
          <Stat $w={65} $up>1252.94</Stat>
          <Stat $w={41} $up>28.76</Stat>
          <Stat $w={47} $up>2.35%</Stat>
          <Stat $w={55}>121.0亿</Stat>
          <Stat $w={52}>总成交</Stat>
          <Stat $w={55}>8440亿</Stat>
          <BoxTag>◎</BoxTag>
          <BoxTag>2</BoxTag>
          <Stat $w={100}>广州联通主站Z1</Stat>
          <StatusIcons>
            <StatusSlot $w={30}><Cloud size={17} strokeWidth={0} /></StatusSlot>
            <StatusSlot $w={29} />
            <StatusSlot $w={30}><Mail size={17} strokeWidth={1.4} /><RedDot /></StatusSlot>
            <StatusSlot $w={30}><KeyGrid size={15} body="#8b929b" keys={BAR} /></StatusSlot>
            <StatusSlot $w={30}><Monitor size={17} strokeWidth={1.4} /></StatusSlot>
            <StatusSlot $w={30}><SatelliteDish size={17} strokeWidth={1.4} /></StatusSlot>
            <StatusSlot $w={30}><RoundIcon $flush><Zap size={10} /></RoundIcon></StatusSlot>
            <StatusSlot $w={9} />
            <Clock>10:42:55</Clock>
          </StatusIcons>
        </StatusBar>
      </Win>

      <Radar>
        <RadarHead>
          市场雷达[运行中] 品种数:800 条数:25
          <small>&gt;&gt;&gt;</small>
          <X size={14} strokeWidth={1.2} />
        </RadarHead>
        <RadarBody>
          <RadarList>
            {radarRows.map(([c, n, p, r, t]) => (
              <RadarRow key={n}>
                <span><Bell size={12} fill={c} color={c} /></span>
                <span>{n}</span>
                <span>10:42</span>
                <span>{p}</span>
                <span>{r}</span>
                <span>{t}</span>
              </RadarRow>
            ))}
          </RadarList>
          <RadarScroll><span /></RadarScroll>
        </RadarBody>
        <RadarFoot>
          <RadarBtn $w={55}>关闭雷达</RadarBtn>
          <RadarBtn $gap={96}>云预警</RadarBtn>
          <RadarBtn>操作<small>∨</small></RadarBtn>
          <RadarBtn>分析</RadarBtn>
          <RadarBtn>设置</RadarBtn>
        </RadarFoot>
      </Radar>

      <Pill>
        <PillIcon>
          <svg width="22" height="20" viewBox="0 0 24 22">
            <circle cx="12" cy="6.5" r="4.2" fill="none" stroke="#fff" strokeWidth="2.6" />
            <circle cx="6.5" cy="15" r="4.2" fill="none" stroke="#fff" strokeWidth="2.6" />
            <circle cx="17.5" cy="15" r="4.2" fill="none" stroke="#fff" strokeWidth="2.6" />
          </svg>
        </PillIcon>
        拖拽至此上传
      </Pill>

      <Ime>
        <ImeSlot>中</ImeSlot>
        <ImeSlot>°,</ImeSlot>
        <ImeSlot><Smile size={18} fill="currentColor" stroke="#fff" strokeWidth={1.6} /></ImeSlot>
        <ImeSlot><Mic size={17} strokeWidth={2.4} /></ImeSlot>
        <ImeSlot><KeyGrid size={17} body="#0b67c8" keys="#fff" /></ImeSlot>
        <ImeSlot><User size={17} color="#c8c8c8" fill="#c8c8c8" /></ImeSlot>
        <ImeSlot><Shirt size={17} fill="currentColor" /></ImeSlot>
        <ImeSlot><LayoutGrid size={16} fill="currentColor" /></ImeSlot>
      </Ime>
      <ImeLogo>S</ImeLogo>

      <Taskbar>
        <Apps>
          {apps.map(([k, open]) => (
            <AppSlot key={k} $open={open} $active={k === 'logo'}>
              <AppIcon kind={k} />
            </AppSlot>
          ))}
        </Apps>
        <Tray>
          <Weather>
            <Cloud size={25} strokeWidth={1} />
            <em>1</em>
          </Weather>
          <WeatherText>18°C 多云</WeatherText>
          <TraySlot><ChevronUp size={17} strokeWidth={1.5} /></TraySlot>
          <TraySlot><SlidersHorizontal size={15} strokeWidth={2.2} /></TraySlot>
          <TraySlot>
            <svg width="16" height="14" viewBox="0 0 16 14">
              <path d="M1 13 V2 L8 8 L15 2 V13 M5 13 V6 M11 13 V6" fill="none" stroke="currentColor" strokeWidth="1.6" />
            </svg>
          </TraySlot>
          <TraySlot><BatteryCharging size={17} strokeWidth={1.3} /></TraySlot>
          <TraySlot><Monitor size={16} strokeWidth={1.3} /></TraySlot>
          <TraySlot><Volume2 size={17} strokeWidth={1.3} /></TraySlot>
          <TraySlot>中</TraySlot>
          <TraySlot $gap={4}>
            <svg width="18" height="18" viewBox="0 0 18 18">
              <rect x="1" y="2" width="15" height="14" rx="2" fill="#e8501f" transform="rotate(-8 9 9)" />
              <text x="9" y="14" textAnchor="middle" fontSize="13" fontWeight="700" fill="#fff" fontFamily="Liberation Sans">S</text>
            </svg>
          </TraySlot>
          <DateBox>
            <div>10:42</div>
            <div>2025/2/19</div>
          </DateBox>
          <Notify>
            <MessageSquare size={18} strokeWidth={1} />
            <em>3</em>
          </Notify>
        </Tray>
      </Taskbar>
    </Desktop>
  );
}
